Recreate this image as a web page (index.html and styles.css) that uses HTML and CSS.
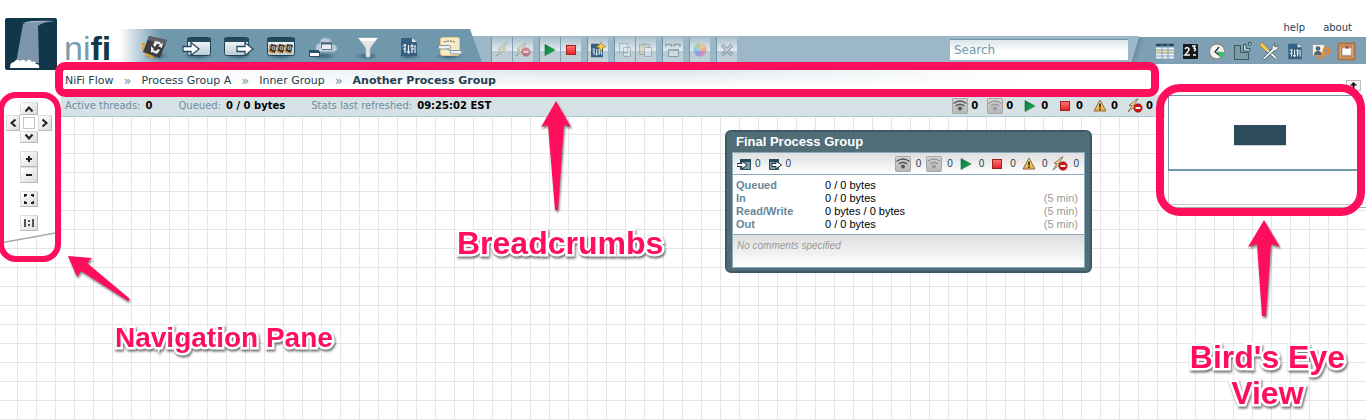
FILE: index.html
```html
<!DOCTYPE html>
<html lang="en">
<head>
<meta charset="utf-8">
<title>NiFi Flow</title>
<link rel="stylesheet" href="styles.css">
</head>
<body>
<svg class="symbols" width="0" height="0" aria-hidden="true">
  <defs>
    <linearGradient id="gPort" x2="0" y2="1"><stop offset="0" stop-color="#fff"/><stop offset="1" stop-color="#b9cbd4"/></linearGradient>
    <linearGradient id="gGreen" x2="1" y2="1"><stop offset="0" stop-color="#0c7a34"/><stop offset="1" stop-color="#14b565"/></linearGradient>
    <linearGradient id="gRed" x2="0" y2="1"><stop offset="0" stop-color="#f77"/><stop offset="1" stop-color="#e32222"/></linearGradient>
    <linearGradient id="gGold" x2="0" y2="1"><stop offset="0" stop-color="#ffe9a0"/><stop offset="1" stop-color="#e8a93a"/></linearGradient>
    <linearGradient id="gGrey" x2="0" y2="1"><stop offset="0" stop-color="#d6d6d6"/><stop offset="1" stop-color="#b4b6b8"/></linearGradient>
    <radialGradient id="gShade"><stop offset="0" stop-color="#1c3c4c" stop-opacity=".6"/><stop offset="1" stop-color="#1c3c4c" stop-opacity="0"/></radialGradient>
    <symbol id="play" viewBox="0 0 16 16"><path d="M3 2.5 13 8 3 13.5Z" fill="url(#gGreen)" stroke="#17693a" stroke-width=".6"/></symbol>
    <symbol id="stop" viewBox="0 0 16 16"><rect x="3.5" y="3.5" width="9" height="9" fill="url(#gRed)" stroke="#a02020"/></symbol>
    <symbol id="warn" viewBox="0 0 16 16"><path d="M8 2 14 13H2Z" fill="url(#gGold)" stroke="#8e6a3a" stroke-linejoin="round"/><path d="M8 5.5v4M8 10.5v1.5" stroke="#222" stroke-width="1.6"/></symbol>
    <symbol id="bolt" viewBox="0 0 16 16"><path d="M11.5 1 4 7.5h3.2L2 14.5 12 7H8.5L13 1Z" fill="#f6dc8c" stroke="#6f6a5c" stroke-width=".8"/></symbol>
    <symbol id="nobolt" viewBox="0 0 16 16"><path d="M10 1 2 7.5h3L1 14 9 7.5H6.5L11 1Z" fill="#f6dc8c" stroke="#6f5a4c" stroke-width=".8"/><circle cx="11" cy="10" r="4.2" fill="#c81414" stroke="#8e1616" stroke-width=".6"/><path d="M8.5 10h5" stroke="#fff" stroke-width="1.8"/></symbol>
    <symbol id="radio" viewBox="0 0 16 16"><rect x=".5" y=".5" width="15" height="15" rx="1" fill="url(#gGrey)" stroke="#a5a7aa"/><g fill="none" stroke="currentColor" stroke-width="1.3"><path d="M1.500 5.500Q8 .5 14.500 5.500"/><path d="M3.800 8Q8 4.500 12.200 8"/></g><circle cx="8" cy="10.500" r="2" fill="currentColor"/></symbol>
    <symbol id="template" viewBox="0 0 18 20"><path d="M1 1h11l5 4v14H1Z" fill="#335f80"/><path d="M12 1v4h5Z" fill="#dce7ed"/><path d="M5 8v8M8.500 8v8M12 8v8M15 8v8M3 12h3M11 12h3" stroke="#e8f0f4" stroke-width="1.200"/><path d="M2.500 9.500 5 7l1 2M7 14l1.500 2.500L10 14M10.500 10 12 7.500l1.500 2.500" fill="none" stroke="#e8f0f4"/></symbol>
  </defs>
</svg>

<div class="app">
  <header class="header">
    <div class="brand">
      <svg class="brand-mark" viewBox="0 0 52 52" aria-hidden="true"><rect width="52" height="52" rx="2" fill="#10384a"/><path d="M18 6Q22 3 50 3 37 4 33 8L34 45H11Z" fill="#7d96ac"/><path d="M18 5Q24 2 50 3 30 4 18 5" fill="#b8c9d6"/><path d="M5 50Q5 44 9 44 12 40 15 43 19 40 21 44 24 39 27 44 30 42 31 46 35 46 34 50Z" fill="#fff"/></svg>
      <span class="brand-name"><span class="brand-light">ni</span><b>fi</b></span>
    </div>

    <div class="components" role="toolbar" aria-label="Components">
      <button class="component" aria-label="Processor"><svg viewBox="0 0 32 32"><ellipse cx="17" cy="25" rx="13" ry="4" fill="url(#gShade)"/><path d="m3 13 3 1M3 17l4 1M4 20l5 2M7 23l4 2M11 25l3 2" stroke="#e79b20" stroke-width="2.500"/><path d="M10 5 28 9 21 27 4 21Z" fill="#3c3d40"/><path d="M10 5 28 9 26 14 9 9Z" fill="#606166"/><path d="m14 14 2-4 5 1 1 2 2-1-1 5-4-2 2-1-1-1-2 0-2 3ZM12 15l3 3-1 1 3 1 2-2 2 1-3 4-5-2-1 1Z" fill="#eee"/></svg></button>
      <button class="component" aria-label="Input Port"><svg viewBox="0 0 32 32"><ellipse cx="17" cy="25" rx="15" ry="4" fill="url(#gShade)"/><rect x="6.500" y="6.500" width="23" height="18" rx="2" fill="url(#gPort)" stroke="#1e4557"/><path d="M6 7h24v4H6Z" fill="#244b5c"/><path d="M2 15.500h8v-4l8 6.500-8 6.500v-4H2Z" fill="#fff" stroke="#244b5c" stroke-width="1.300"/></svg></button>
      <button class="component" aria-label="Output Port"><svg viewBox="0 0 32 32"><ellipse cx="15" cy="25" rx="14" ry="4" fill="url(#gShade)"/><rect x="1.500" y="6.500" width="24" height="18" rx="2" fill="url(#gPort)" stroke="#1e4557"/><path d="M1 7h25v4H1Z" fill="#244b5c"/><path d="M14 15.500h8v-4l8 6.500-8 6.500v-4h-8Z" fill="#fff" stroke="#244b5c" stroke-width="1.300"/></svg></button>
      <button class="component" aria-label="Process Group"><svg viewBox="0 0 32 32"><ellipse cx="16" cy="25" rx="15" ry="4" fill="url(#gShade)"/><rect x="2.500" y="6.500" width="27" height="18" rx="2" fill="url(#gPort)" stroke="#1e4557"/><path d="M2 7h28v4H2Z" fill="#244b5c"/><g id="chip"><path d="m6 13 6 1-2 8-6-2Z" fill="#333"/><path d="m4 14 1 2-1 4 4 2" fill="none" stroke="#e08c25" stroke-width="1.500"/><circle cx="8.500" cy="17" r="1.500" fill="none" stroke="#eee" stroke-width=".9"/></g><use href="#chip" x="8"/><use href="#chip" x="16"/></svg></button>
      <button class="component" aria-label="Remote Process Group"><svg viewBox="0 0 32 32"><ellipse cx="16" cy="25" rx="14" ry="4" fill="url(#gShade)"/><path d="M9 21Q7 13 13 12 13 6 20 7 25 8 25 13 31 14 30 19 29 21 25 21Z" fill="#b9cbd6" stroke="#8ba7b6"/><rect x="14.500" y="11.500" width="10" height="7" fill="#e8eef1" stroke="#5b7c8d"/><path d="M14 12h11v1.500H14Z" fill="#44697c"/><rect x="2.500" y="19.500" width="10" height="6" fill="#fff" stroke="#2b5266"/><path d="M2 20h11v2H2Z" fill="#2b5266"/><path d="m12 20 4-3" stroke="#fff"/></svg></button>
      <button class="component" aria-label="Funnel"><svg viewBox="0 0 32 32"><ellipse cx="18" cy="25" rx="12" ry="4" fill="url(#gShade)"/><path d="M9 7h20q-7 8-8 11v8h-4v-8Q16 15 9 7Z" fill="#e7e7e7" stroke="#b7bdc0" stroke-width=".7"/><path d="M10 7h18l-2 3H12Z" fill="#fff"/></svg></button>
      <button class="component" aria-label="Template"><svg viewBox="0 0 32 32"><ellipse cx="18" cy="25" rx="12" ry="4" fill="url(#gShade)"/><use href="#template" x="9" y="6" width="18" height="20"/></svg></button>
      <button class="component" aria-label="Label"><svg viewBox="0 0 32 32"><ellipse cx="16" cy="25" rx="14" ry="4" fill="url(#gShade)"/><rect x="7.500" y="6.500" width="19" height="18" rx="2" fill="#f4e9c8" stroke="#e7c878"/><path d="M11 11q5-2 11 0" fill="none" stroke="#555" stroke-dasharray="2 1"/><rect x="5.500" y="14.500" width="12" height="3.500" rx="1" fill="#eef2f4" stroke="#8496a0"/><rect x="17.500" y="19.500" width="11" height="3.500" rx="1" fill="#eef2f4" stroke="#8496a0"/><path d="m14 18 4 2" fill="none" stroke="#8496a0"/></svg></button>
    </div>

    <div class="operations" role="toolbar" aria-label="Operations">
      <div class="op-group">
        <button class="op" aria-label="Enable" disabled><svg viewBox="0 0 16 16"><use href="#bolt"/></svg></button>
        <button class="op" aria-label="Disable" disabled><svg viewBox="0 0 16 16"><use href="#nobolt"/></svg></button>
      </div>
      <div class="op-group">
        <button class="op" aria-label="Start"><svg viewBox="0 0 16 16"><use href="#play"/></svg></button>
        <button class="op" aria-label="Stop"><svg viewBox="0 0 16 16"><use href="#stop"/></svg></button>
      </div>
      <div class="op-group">
        <button class="op" aria-label="Create Template"><svg viewBox="0 0 16 16"><use href="#template" x="0" y="1" width="14" height="15"/><path d="m11 0 1.300 3.200L16 4.500l-3.500 1.300L11 9.500 9.500 5.800 6 4.500l3.700-1.300Z" fill="#fbd54c" stroke="#b08316" stroke-width=".7"/></svg></button>
      </div>
      <div class="op-group">
        <button class="op" aria-label="Copy" disabled><svg viewBox="0 0 16 16"><path d="M2.500 1.500h8v9h-8ZM6.500 5.500h7v9h-7Z" fill="#e9eff2" stroke="#6d8896"/></svg></button>
        <button class="op" aria-label="Paste" disabled><svg viewBox="0 0 16 16"><path d="M1.500 2.500h10v10h-10Z" fill="#d9c79c" stroke="#7d7d70"/><path d="M4 1h5v2.500H4Z" fill="#8295a0"/><path d="M6.500 5.500h7v9h-7Z" fill="#e9eff2" stroke="#6d8896"/></svg></button>
      </div>
      <div class="op-group">
        <button class="op" aria-label="Group" disabled><svg viewBox="0 0 16 16"><path d="M.5 5V2.500h6V5M9 5V2.500h6V5" fill="none" stroke="#3f6174" stroke-width="1.400"/><path d="M3.500 7.500h10v7h-10Z" fill="#e9eff2" stroke="#3f6174"/><path d="M3 7h11v2H3Z" fill="#3f6174"/></svg></button>
      </div>
      <div class="op-group">
        <button class="op" aria-label="Fill Color" disabled><svg viewBox="0 0 16 16"><path d="M8 8V1.500A6.500 6.500 0 0 1 13.600 4.800Z" fill="#f4b23c"/><path d="M8 8 13.600 4.800a6.500 6.500 0 0 1 0 6.400Z" fill="#f05a3c"/><path d="M8 8l5.600 3.200A6.500 6.500 0 0 1 8 14.500Z" fill="#d544b0"/><path d="M8 8v6.500a6.500 6.500 0 0 1-5.600-3.300Z" fill="#6a5be0"/><path d="M8 8 2.400 11.200a6.500 6.500 0 0 1 0-6.400Z" fill="#3c9ce0"/><path d="M8 8 2.400 4.800A6.500 6.500 0 0 1 8 1.500Z" fill="#74c05a"/></svg></button>
      </div>
      <div class="op-group">
        <button class="op" aria-label="Delete" disabled><svg viewBox="0 0 16 16"><path d="m3 3 10 10M13 3 3 13" stroke="#35596b" stroke-width="3.600"/><path d="m3 3 10 10M13 3 3 13" stroke="#a9bec8" stroke-width="1.600"/></svg></button>
      </div>
      <input class="search" type="text" placeholder="Search" aria-label="Search">
    </div>

    <div class="utilities">
      <nav class="links"><a href="#help">help</a><a href="#about">about</a></nav>
      <div class="util-bar" role="toolbar" aria-label="Tools">
        <button class="util" aria-label="Summary"><svg viewBox="0 0 20 20"><path d="M1 4h18" stroke="#254a5c" stroke-width="2.500"/><path d="M1 7.500h18M1 13.500h18M1 16.500h18" stroke="#eef3f5" stroke-width="2"/><path d="M1 10.500h18" stroke="#f5dfa0" stroke-width="2"/><path d="M7 3v15M13 3v15" stroke="#7f9fb4"/></svg></button>
        <button class="util" aria-label="Counters"><svg viewBox="0 0 20 20"><rect x="2" y="3" width="15" height="15" rx="1" fill="#161819"/><path d="M4 8q2-3 4 0 0 2-4 6h5M11 5h3l-1 2q3 1 0 3M12 14h3" fill="none" stroke="#f4f4f4" stroke-width="1.600"/></svg></button>
        <button class="util" aria-label="Flow History"><svg viewBox="0 0 20 20"><circle cx="10" cy="10.500" r="7.500" fill="#f3f5f5" stroke="#8b7663"/><path d="M10 10.500 17 11Q17 16 13 17Z" fill="#35c06a"/><path d="M12 6 8 11l4 3" fill="none" stroke="#333" stroke-width="1.300"/></svg></button>
        <button class="util" aria-label="Controller Layout"><svg viewBox="0 0 20 20"><path d="M1.500 4.500h6v7h8v7h-14Z" fill="#7f9c9e" stroke="#345a63"/><path d="M10.500 3.500h2.500v4h4v2.500h-6.500ZM15.500 1.500h2.500v2.500h-2.500Z" fill="#c8d6da" stroke="#345a63"/></svg></button>
        <button class="util" aria-label="Controller Settings"><svg viewBox="0 0 20 20"><path d="m7 8 10 9" stroke="#59656b" stroke-width="3.600"/><path d="m7 8 10 9" stroke="#f0f2f3" stroke-width="2"/><path d="m2 3 6 6" stroke="#a97c1c" stroke-width="4.400"/><path d="m2 3 6 6" stroke="#f4cf4f" stroke-width="3"/><path d="M3 18 13 8Q12 4 16 2L15 5l2 1 2-2q1 5-4 6L5 19Z" fill="#eef1f2" stroke="#5c696f"/></svg></button>
        <button class="util" aria-label="Templates"><svg viewBox="0 0 20 20"><use href="#template" x="2" y="2" width="16" height="17"/></svg></button>
        <button class="util" aria-label="Users"><svg viewBox="0 0 20 20"><rect x="1.500" y="3.500" width="12" height="11" fill="#edf0f1" stroke="#9aa3a7"/><circle cx="7" cy="7.500" r="2.300" fill="#55646c"/><path d="M3 14q0-4 4-4t4 4Z" fill="#55646c"/><circle cx="15.500" cy="10" r="3" fill="none" stroke="#e58a2c" stroke-width="2.200"/><path d="m13 12-6 6M10 15l2 2" stroke="#e58a2c" stroke-width="2.200"/></svg></button>
        <button class="util" aria-label="Bulletin Board"><svg viewBox="0 0 20 20"><rect x="1.500" y="2.500" width="16" height="16" fill="#d7a474" stroke="#a87548" stroke-width="2"/><path d="M4 4.500h11v12H4Z" fill="#b8814f"/><path d="M5.500 7h8.500v7H5.500Z" fill="#fff" stroke="#ccc"/><path d="M8.500 5.500h3v2h-3Z" fill="#b03440"/></svg></button>
      </div>
    </div>
  </header>

  <nav class="breadcrumbs" aria-label="Breadcrumbs">
    <a href="#root">NiFi Flow</a><span class="sep">»</span><a href="#a">Process Group A</a><span class="sep">»</span><a href="#inner">Inner Group</a><span class="sep">»</span><b>Another Process Group</b>
  </nav>

  <main class="workspace">
    <aside class="navigation" aria-label="Navigation">
      <div class="nav-body">
        <div class="pan">
          <button class="nav-btn pan-up" aria-label="Pan up"><svg viewBox="0 0 10 10"><path d="M1.500 7.500 5 3.500 8.500 7.500"/></svg></button>
          <button class="nav-btn pan-left" aria-label="Pan left"><svg viewBox="0 0 10 10"><path d="M7.500 1.500 3.500 5 7.500 8.500"/></svg></button>
          <span class="pan-center"></span>
          <button class="nav-btn pan-right" aria-label="Pan right"><svg viewBox="0 0 10 10"><path d="M2.500 1.500 6.500 5 2.500 8.500"/></svg></button>
          <button class="nav-btn pan-down" aria-label="Pan down"><svg viewBox="0 0 10 10"><path d="M1.500 2.500 5 6.500 8.500 2.500"/></svg></button>
        </div>
        <div class="zoom">
          <button class="nav-btn" aria-label="Zoom in"><svg viewBox="0 0 10 10"><path d="M2 5h6M5 2v6"/></svg></button>
          <button class="nav-btn" aria-label="Zoom out"><svg viewBox="0 0 10 10"><path d="M2 5h6"/></svg></button>
        </div>
        <button class="nav-btn" aria-label="Fit"><svg viewBox="0 0 10 10"><path d="M.5 3V1H3M7 1h2.500v2M9.500 7v2H7M3 9H.5V7"/></svg></button>
        <button class="nav-btn" aria-label="Actual size"><svg class="thin" viewBox="0 0 10 10"><path d="M1 1v8M9 1v8M5 2v2M5 6v2"/></svg></button>
      </div>
      <svg class="nav-foot" viewBox="0 0 61 14" preserveAspectRatio="none" aria-hidden="true"><path d="M0 0H61V1L0 12Z" fill="#fff"/><path d="M0 12 61 1" stroke="#a9a9a9" stroke-width="1.500"/></svg>
    </aside>

    <section class="center">
      <div class="status">
        <span class="status-item"><span class="muted">Active threads:</span> <b>0</b></span>
        <span class="status-item"><span class="muted">Queued:</span> <b>0 / 0 bytes</b></span>
        <span class="status-item"><span class="muted">Stats last refreshed:</span> <b>09:25:02 EST</b></span>
        <ul class="counts">
          <li><svg class="icon"><use href="#radio"/></svg><b>0</b></li>
          <li><svg class="icon faded"><use href="#radio"/></svg><b>0</b></li>
          <li><svg class="icon"><use href="#play"/></svg><b>0</b></li>
          <li><svg class="icon"><use href="#stop"/></svg><b>0</b></li>
          <li><svg class="icon"><use href="#warn"/></svg><b>0</b></li>
          <li><svg class="icon"><use href="#nobolt"/></svg><b>0</b></li>
        </ul>
      </div>
      <div class="canvas">
        <article class="group">
          <h2 class="group-title">Final Process Group</h2>
          <div class="group-body">
            <div class="group-counts">
              <ul class="ports">
                <li><svg class="port" viewBox="0 0 14 14"><path d="M3.500 2.500h10v10h-10Z" fill="#7f99a5" stroke="#244b5c"/><path d="M3 2h11v3H3Z" fill="#244b5c"/><path d="M0 6.500h5V4l5 4-5 4V9.500H0Z" fill="#fff" stroke="#16303c"/></svg>0</li>
                <li><svg class="port" viewBox="0 0 14 14"><path d="M1.500 2.500h9v10h-9Z" fill="#7f99a5" stroke="#244b5c"/><path d="M1 2h10v3H1Z" fill="#244b5c"/><path d="M4 6.500h4V4l5.500 4L8 12V9.500H4Z" fill="#fff" stroke="#16303c"/></svg>0</li>
              </ul>
              <ul class="states">
                <li><svg class="icon"><use href="#radio"/></svg>0</li>
                <li><svg class="icon faded"><use href="#radio"/></svg>0</li>
                <li><svg class="icon"><use href="#play"/></svg>0</li>
                <li><svg class="icon"><use href="#stop"/></svg>0</li>
                <li><svg class="icon"><use href="#warn"/></svg>0</li>
                <li><svg class="icon"><use href="#nobolt"/></svg>0</li>
              </ul>
            </div>
            <table class="stats">
              <tr><th scope="row">Queued</th><td>0 / 0 bytes</td><td class="window"></td></tr>
              <tr><th scope="row">In</th><td>0 / 0 bytes</td><td class="window">(5 min)</td></tr>
              <tr><th scope="row">Read/Write</th><td>0 bytes / 0 bytes</td><td class="window">(5 min)</td></tr>
              <tr><th scope="row">Out</th><td>0 / 0 bytes</td><td class="window">(5 min)</td></tr>
            </table>
            <p class="comments">No comments specified</p>
          </div>
        </article>
      </div>
    </section>

    <aside class="birdseye" aria-label="Bird's eye">
      <button class="collapse" aria-label="Collapse"><svg viewBox="0 0 10 10"><path d="M5 1 9 5H6v4H4V5H1Z" fill="#111"/></svg></button>
      <div class="overview"><div class="viewport"><span class="overview-group"></span></div></div>
    </aside>
  </main>

  <div class="mark mark-crumbs"></div>
  <div class="mark mark-nav"></div>
  <div class="mark mark-bird"></div>
  <svg class="arrow arrow-crumbs" viewBox="0 0 36 116" aria-hidden="true"><path d="M18 2 33 28 26 26 20 111h-3L10 26 3 28Z"/></svg>
  <svg class="arrow arrow-nav" viewBox="0 0 70 52" aria-hidden="true"><path d="M4 3 28 5 23 10 66 46l-2 2L17 18 13 24Z"/></svg>
  <svg class="arrow arrow-bird" viewBox="0 0 36 102" aria-hidden="true"><path d="M18 2 34 29 25 26 20 98h-4L11 26 2 29Z"/></svg>
  <div class="callout callout-crumbs">Breadcrumbs</div>
  <div class="callout callout-nav">Navigation Pane</div>
  <div class="callout callout-bird">Bird's Eye<br>View</div>
</div>
</body>
</html>
```

FILE: styles.css
```css
* { box-sizing: border-box; }

body {
  margin: 0;
  background: #fff;
  color: #264050;
  font: 11px/14px "DejaVu Sans", Verdana, sans-serif;
}

button {
  display: flex;
  align-items: center;
  justify-content: center;
  padding: 0;
  border: 0;
  background: none;
}

a { color: inherit; text-decoration: none; }
ul { display: flex; margin: 0; padding: 0; list-style: none; }
li { display: flex; align-items: center; }

.symbols { position: absolute; }

.app {
  position: relative;
  display: flex;
  flex-direction: column;
  min-height: 100vh;
  overflow: hidden;
}

/* Header */
.header { position: relative; display: flex; align-items: flex-end; height: 62px; }

.brand { display: flex; align-items: flex-end; width: 120px; padding-left: 5px; }
.brand-mark { flex: none; width: 52px; height: 52px; margin-bottom: -8px; }
.brand-name {
  height: 36px;
  margin-left: 7px;
  color: #10384a;
  font: 34px/44px "Liberation Sans Narrow", "Liberation Sans", sans-serif;
}
.brand-light { color: #7b9bad; }

.components {
  z-index: 1;
  display: flex;
  height: 33px;
  margin-right: -12px;
  padding: 0 12px 0 14px;
  background: linear-gradient(to right, #fff, #7098ad 40px);
  clip-path: polygon(0 0, calc(100% - 12px) 0, 100% 100%, 0 100%);
}
.component { width: 42px; height: 33px; padding-top: 2px; }
.component svg { width: 32px; height: 32px; }

.operations {
  display: flex;
  flex: 1;
  align-items: flex-start;
  gap: 6px;
  height: 26px;
  padding: 1px 11px 0 21px;
  background: #9cb8c8;
}
.op-group { display: flex; gap: 1px; border-left: 1px solid #6e96ab; background: #7fa1b3; }
.op { width: 20px; height: 25px; background: linear-gradient(#a9c0cc, #e3eaee 55%, #b9cad3 56%, #c3d1d8); }
.op svg { width: 16px; height: 16px; }
.op:disabled svg { opacity: .45; }

.search {
  width: 178px;
  height: 21px;
  margin: 2px 0 0 auto;
  padding: 0 4px;
  border: 0;
  border-top: 1px solid #6f96a9;
  background: linear-gradient(#dbe5e9, #fff 12px);
  font: 12px "DejaVu Sans", Verdana, sans-serif;
}
.search::placeholder { color: #7098ad; opacity: 1; }

.utilities { display: flex; flex-direction: column; margin-bottom: -2px; margin-left: -8px; }
.links { display: flex; justify-content: flex-end; gap: 18px; padding: 0 14px 2px 0; font-size: 10px; }
.util-bar {
  display: flex;
  height: 27px;
  padding: 0 6px 0 21px;
  background: linear-gradient(107deg, #54788a, #7f9fb4 14px);
  clip-path: polygon(8px 0, 100% 0, 100% 100%, 0 100%);
}
.util { width: 26px; height: 27px; }
.util svg { width: 20px; height: 20px; }

/* Breadcrumbs */
.breadcrumbs {
  display: flex;
  align-items: center;
  gap: 10px;
  height: 33px;
  padding: 4px 0 0 65px;
  background:
    linear-gradient(to right, #fff 10%, transparent 40%, transparent 50%, #fff 75%),
    linear-gradient(#d0dde3, #fff 26px);
}
.sep { color: #6f8fa3; font-size: 13px; }

/* Workspace */
.workspace {
  display: grid;
  flex: 1;
  grid-template-columns: 61px 1fr 201px;
  background-image:
    linear-gradient(to right, #e5e5e5 1px, transparent 1px),
    linear-gradient(#e5e5e5 1px, transparent 1px);
  background-position: 17px 1px;
  background-size: 19px 19px;
}

.nav-body {
  display: flex;
  flex-direction: column;
  align-items: center;
  gap: 8px;
  padding: 7px 3px 0 0;
  background: #fff;
}
.nav-foot { display: block; width: 61px; height: 14px; }
.nav-btn {
  width: 18px;
  height: 16px;
  border: 1px solid #b9b9b9;
  border-top-color: #ddd;
  border-left-color: #ddd;
  background: linear-gradient(135deg, #fff, #dcdcdc);
}
.nav-btn svg { width: 10px; height: 10px; fill: none; stroke: #222; stroke-width: 2; }
.nav-btn .thin { stroke-width: 1.5; }
.pan { display: grid; grid-template: 13px 16px 12px / 14px 18px 14px; }
.pan .nav-btn { width: auto; height: auto; }
.pan-up { grid-area: 1 / 2; }
.pan-left { grid-area: 2 / 1; }
.pan-center { grid-area: 2 / 2; margin: 2px 3px; border: 1px solid #c4c4c4; background: #fff; }
.pan-right { grid-area: 2 / 3; }
.pan-down { grid-area: 3 / 2; }

.center { display: flex; flex-direction: column; min-width: 0; }
.status {
  display: flex;
  align-items: center;
  gap: 26px;
  height: 22px;
  padding: 1px 12px 0 4px;
  border-bottom: 1px solid #b0c8d4;
  background: #d6e1e6;
  color: #000;
  font-size: 10px;
}
.status-item { display: flex; gap: 5px; }
.muted { color: #6f8ea0; }
.counts { gap: 9px; margin-left: auto; }
.counts li { gap: 3px; }
.icon { width: 16px; height: 16px; color: #555; }
.faded { color: #999; }

/* Components placed on the free canvas */
.canvas { position: relative; flex: 1; }
.group {
  position: absolute;
  left: 664px;
  top: 13px;
  width: 367px;
  padding: 0 5px 3px;
  border: 2px solid #3b5a66;
  border-radius: 6px;
  background: rgba(56, 89, 101, .88);
  font-family: "Liberation Sans", Arial, sans-serif;
}
.group-title { margin: 0; padding: 0 4px; color: #fff; font-size: 13px; line-height: 20px; }
.group-body { border: 1px solid #8aaabb; background: #fff; color: #000; }
.group-counts {
  display: flex;
  justify-content: space-between;
  height: 22px;
  padding: 0 5px 0 4px;
  border-bottom: 1px solid #8aaabb;
  background: linear-gradient(#dedede, #fff);
  color: #264050;
  font-size: 10px;
}
.ports { gap: 7px; }
.ports li { gap: 4px; }
.port { width: 14px; height: 14px; }
.states { gap: 5px; }
.states li { gap: 5px; }
.stats { width: 100%; margin: 4px 0 3px; border-collapse: collapse; line-height: 13px; font-size: 11px; }
.stats th { width: 92px; padding: 0 0 0 3px; color: #66879b; text-align: left; }
.stats td { padding: 0; }
.stats .window { padding-right: 6px; color: #999; text-align: right; }
.comments {
  height: 33px;
  margin: 0;
  padding: 4px;
  border-top: 1px solid #8aaabb;
  background: linear-gradient(#dedede, #fff);
  color: #999;
  font-size: 10px;
  font-style: italic;
}

/* Bird's eye */
.birdseye {
  position: relative;
  align-self: start;
  height: 113px;
  padding: 0 3px;
  border-bottom: 1px solid #aaa;
  background: #fff;
}
.collapse {
  position: absolute;
  right: 5px;
  top: -15px;
  width: 15px;
  height: 11px;
  border: 1px solid #bbb;
  background: #f4f4f4;
}
.collapse svg { width: 9px; height: 9px; }
.overview { height: 110px; border: 1px solid #ccc; border-top: 0; }
.viewport {
  height: 76px;
  margin-left: -1px;
  padding: 29px 0 0 65px;
  border: 1px solid #7098ad;
  border-bottom: 2px solid #7098ad;
}
.overview-group { display: block; width: 52px; height: 20px; background: #2b4c58; box-shadow: 0 1px #c9d6dc; }

/* Annotations over the interface */
.mark { position: absolute; border: 8px solid #ff0f5b; }
.mark-crumbs { left: 55px; right: 207px; top: 62px; height: 35px; border-radius: 10px; }
.mark-nav { left: -2px; top: 92px; width: 63px; height: 170px; border-width: 6px; border-radius: 18px; }
.mark-bird { right: 1px; top: 84px; width: 209px; height: 132px; border-radius: 24px; }
.arrow { position: absolute; fill: #ff0f5b; filter: drop-shadow(1px 2px 1px rgba(0, 0, 0, .5)); }
.arrow-crumbs { left: 538px; top: 99px; width: 36px; height: 116px; }
.arrow-nav { left: 64px; top: 253px; width: 70px; height: 52px; }
.arrow-bird { right: 84px; top: 218px; width: 36px; height: 102px; }
.callout {
  position: absolute;
  color: #ff0f5b;
  font: bold 32px/36px "Liberation Sans", Arial, sans-serif;
  text-align: center;
  white-space: nowrap;
  -webkit-text-stroke: 5px #fff;
  paint-order: stroke fill;
  filter: drop-shadow(1px 2px 1px rgba(0, 0, 0, .55));
}
.callout-crumbs { left: 457px; top: 225px; }
.callout-nav { left: 115px; top: 320px; font-size: 28px; }
.callout-bird { right: 21px; top: 339px; }
```
